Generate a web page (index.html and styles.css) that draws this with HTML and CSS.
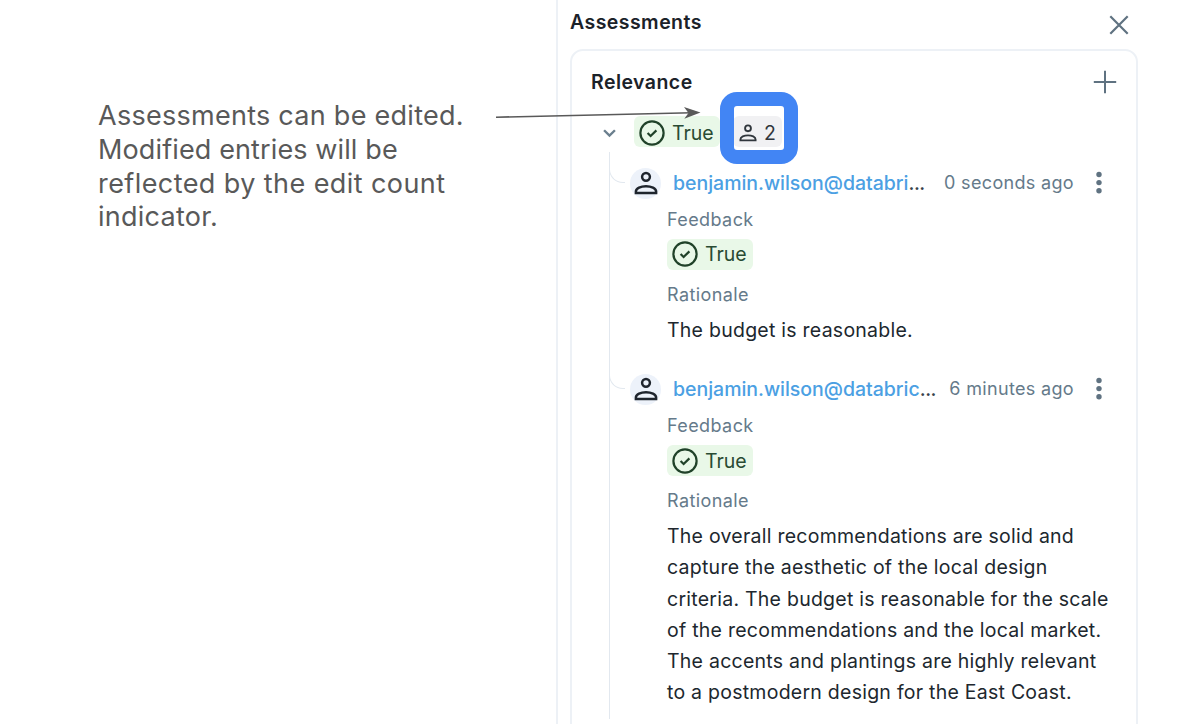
FILE: index.html
```html
<!DOCTYPE html>
<html lang="en">
<head>
<meta charset="utf-8">
<title>Assessments</title>
<link rel="stylesheet" href="styles.css">
</head>
<body>
<svg class="defs" width="0" height="0" aria-hidden="true">
  <symbol id="person" viewBox="0 0 24 24">
    <circle cx="12" cy="5.8" r="3.9"/>
    <path d="M1.9 21.9v-1.4c0-3.3 5-5.3 10.1-5.3s10.1 2 10.1 5.3v1.4z"/>
  </symbol>
  <symbol id="check" viewBox="0 0 26 26">
    <circle cx="13" cy="13" r="11.6"/>
    <path d="M8.6 13l3 3 5.8-5.6"/>
  </symbol>
  <symbol id="dots" viewBox="0 0 6 24">
    <circle cx="3" cy="3.5" r="2.7"/><circle cx="3" cy="11.6" r="2.7"/><circle cx="3" cy="19.7" r="2.7"/>
  </symbol>
</svg>
<main class="page">
  <p class="note"><span class="n1">Assessments can be edited.</span><br><span class="n2">Modified entries will be</span><br><span class="n3">reflected by the edit count</span><br><span class="n4">indicator.</span></p>
  <section class="panel">
    <header class="panel-head">
      <h1 class="title">Assessments</h1>
      <svg class="close" viewBox="0 0 20 20"><path d="M1.3 1.3l17.4 17.4M18.7 1.3L1.3 18.7"/></svg>
    </header>
    <div class="card">
      <div class="card-head">
        <h2 class="title">Relevance</h2>
        <svg class="plus" viewBox="0 0 24 24"><path d="M12 .8v22.4M.8 12h22.4"/></svg>
      </div>
      <div class="summary">
        <svg class="chevron" viewBox="0 0 12 8"><path d="M1 1l5 5 5-5"/></svg>
        <span class="tag summary-tag"><svg class="check"><use href="#check"/></svg><span>True</span></span>
        <span class="count"><svg class="person-small" viewBox="0 0 24 24"><use href="#person"/></svg><span>2</span><span class="highlight"></span></span>
      </div>
      <div class="thread">
        <article class="entry first">
          <div class="entry-head">
            <span class="avatar"><svg class="person"><use href="#person"/></svg></span>
            <span class="email">benjamin.wilson@databri<i>...</i></span>
            <time>0 seconds ago</time>
            <svg class="dots"><use href="#dots"/></svg>
          </div>
          <div class="label">Feedback</div>
          <span class="tag"><svg class="check"><use href="#check"/></svg><span>True</span></span>
          <div class="label rationale">Rationale</div>
          <p class="body">The budget is reasonable.</p>
        </article>
        <article class="entry">
          <div class="entry-head">
            <span class="avatar"><svg class="person"><use href="#person"/></svg></span>
            <span class="email">benjamin.wilson@databric<i>...</i></span>
            <time>6 minutes ago</time>
            <svg class="dots"><use href="#dots"/></svg>
          </div>
          <div class="label">Feedback</div>
          <span class="tag"><svg class="check"><use href="#check"/></svg><span>True</span></span>
          <div class="label rationale">Rationale</div>
          <p class="body">The overall recommendations are solid and<br>capture the aesthetic of the local design<br>criteria. The budget is reasonable for the scale<br>of the recommendations and the local market.<br>The accents and plantings are highly relevant<br>to a postmodern design for the East Coast.</p>
        </article>
      </div>
    </div>
  </section>
  <svg class="arrow" viewBox="0 0 206 14"><path class="shaft" d="M0 10.2L196 5.8"/><path class="tip" d="M188 0L204.5 5.6 188.3 11.8 192.5 5.9z"/></svg>
</main>
</body>
</html>
```

FILE: styles.css
```css
* { box-sizing: border-box; }
body { margin: 0; background: #fff; }
.defs { position: absolute; }
h1, h2, p { margin: 0; }
svg { display: block; fill: none; flex: none; }

.page {
  position: relative;
  display: grid;
  grid-template-columns: 556px 1fr;
  width: 1180px;
  height: 724px;
  overflow: hidden;
  font-family: Inter, "Liberation Sans", sans-serif;
  font-size: 19.5px;
  color: #20272e;
}

.note {
  padding: 99px 0 0 98px;
  font-size: 27px;
  line-height: 33.8px;
  color: #595959;
  white-space: nowrap;
}
.n1 { letter-spacing: .27px; }
.n2 { letter-spacing: .12px; }
.n3 { letter-spacing: .42px; }
.n4 { letter-spacing: .25px; }

.panel { border-left: 2px solid #edf1f6; padding-left: 12px; height: 724px; }
.panel-head { display: flex; justify-content: space-between; height: 49px; width: 559px; padding-top: 7px; }
.title { font-size: 19.5px; line-height: 30px; font-weight: 600; letter-spacing: .45px; color: #1b2229; white-space: nowrap; }
.close { width: 20px; height: 20px; margin-top: 8px; stroke: #5f7281; stroke-width: 2.2; }

.card { width: 568px; height: 700px; border: 2px solid #edf1f6; border-radius: 13px; padding: 16px 19px 0; }
.card-head { display: flex; justify-content: space-between; height: 49px; }
.plus { width: 24px; height: 24px; margin: 3px 0 0; stroke: #5f7281; stroke-width: 2; }

.summary { display: flex; align-items: center; height: 31px; padding-left: 12px; }
.summary span span { padding-top: 2px; }
.summary .highlight { padding: 0; }
.chevron { width: 13px; height: 9px; margin-right: 18px; stroke: #6b7f8e; stroke-width: 2.2; margin-top: 4px; }
.tag {
  display: flex;
  align-items: center;
  gap: 7px;
  width: 86px;
  height: 31px;
  padding-left: 5px;
  border-radius: 6px;
  background: #e9f8e8;
  color: #294b33;
}
.check { width: 26px; height: 26px; stroke: #204229; stroke-width: 2.2; }
.summary .check { margin-top: 2px; }
.count {
  position: relative;
  display: flex;
  align-items: center;
  gap: 7px;
  width: 49px;
  height: 31px;
  margin-left: 13px;
  padding-left: 6px;
  border-radius: 6px;
  background: #f1f1f3;
  color: #30363c;
}
.person-small { width: 18px; height: 18px; margin-top: 2px; stroke: #30363c; stroke-width: 2.5; }
.highlight {
  position: absolute;
  left: -13px;
  top: -24px;
  width: 78px;
  height: 72px;
  border: 14px solid #4285f4;
  border-radius: 17px;
}

.thread { margin-left: 18px; border-left: 1.5px solid #e2e8ef; margin-top: 5px; height: 567px; padding-top: 15px; }
.entry { padding-left: 57px; }
.entry.first { height: 206px; }
.entry-head { display: flex; align-items: center; height: 32px; margin-left: -57px; }
.entry-head::before {
  content: "";
  flex: none;
  width: 15px;
  height: 15px;
  margin: -17px 5px 0 -1px;
  border: 1.5px solid #e2e8ef;
  border-width: 0 0 1.5px 1.5px;
  border-bottom-left-radius: 14px;
}
.avatar { display: grid; place-items: center; width: 31px; height: 31px; border-radius: 50%; background: #edf2fa; flex: none; }
.person { width: 24px; height: 24px; stroke: #1f252d; stroke-width: 2.5; }
.email { margin-left: 12px; color: #4ba0e3; white-space: nowrap; font-size: 19.5px; font-weight: 500; letter-spacing: -.02px; }
.email i { font-style: normal; color: #38424b; letter-spacing: -.5px; }
time { margin: -2px 0 0 auto; color: #657a8a; font-size: 18px; letter-spacing: .33px; white-space: nowrap; }
.dots { width: 6px; height: 24px; margin: 0 15px 0 22px; fill: #5f7281; }
.label { height: 30px; margin-top: 6px; line-height: 30px; font-size: 18px; letter-spacing: .4px; color: #657a8a; }
.entry > .tag { margin-top: 4px; }
.first > .tag .check { margin-top: -2px; }
.first > .tag span { margin-top: -2px; }
.rationale { margin-top: 10px; }
.body { margin-top: 5px; line-height: 31.3px; letter-spacing: .25px; white-space: nowrap; }
.arrow { position: absolute; left: 496px; top: 107px; width: 206px; height: 14px; }
.shaft { stroke: #595959; stroke-width: 1.6; }
.tip { fill: #595959; }
```
